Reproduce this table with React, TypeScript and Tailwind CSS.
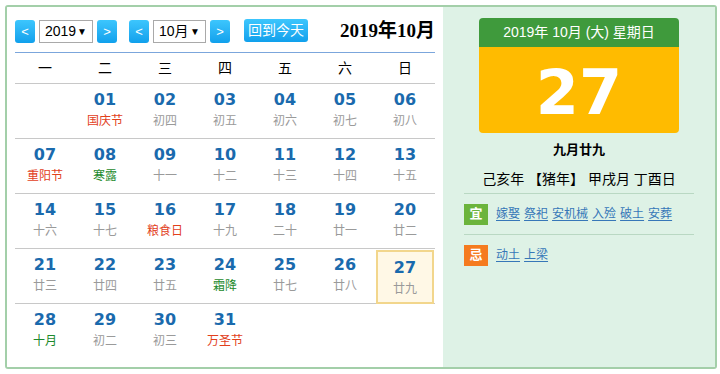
import React from "react";

type Day = { d: string; l: string; c?: "red" | "green"; today?: boolean } | null;

const rows: Day[][] = [
  [null, { d: "01", l: "国庆节", c: "red" }, { d: "02", l: "初四" }, { d: "03", l: "初五" }, { d: "04", l: "初六" }, { d: "05", l: "初七" }, { d: "06", l: "初八" }],
  [{ d: "07", l: "重阳节", c: "red" }, { d: "08", l: "寒露", c: "green" }, { d: "09", l: "十一" }, { d: "10", l: "十二" }, { d: "11", l: "十三" }, { d: "12", l: "十四" }, { d: "13", l: "十五" }],
  [{ d: "14", l: "十六" }, { d: "15", l: "十七" }, { d: "16", l: "粮食日", c: "red" }, { d: "17", l: "十九" }, { d: "18", l: "二十" }, { d: "19", l: "廿一" }, { d: "20", l: "廿二" }],
  [{ d: "21", l: "廿三" }, { d: "22", l: "廿四" }, { d: "23", l: "廿五" }, { d: "24", l: "霜降", c: "green" }, { d: "25", l: "廿七" }, { d: "26", l: "廿八" }, { d: "27", l: "廿九", today: true }],
  [{ d: "28", l: "十月", c: "green" }, { d: "29", l: "初二" }, { d: "30", l: "初三" }, { d: "31", l: "万圣节", c: "red" }, null, null, null],
];

const weekdays = ["一", "二", "三", "四", "五", "六", "日"];
const yi = ["嫁娶", "祭祀", "安机械", "入殓", "破土", "安葬"];
const ji = ["动土", "上梁"];

const sans = "font-['Liberation_Sans','Noto_Sans_CJK_SC',sans-serif]";

function NavBtn({ children }: { children: React.ReactNode }) {
  return (
    <span className="flex h-[23px] w-[20px] items-center justify-center rounded-[3px] bg-gradient-to-b from-[#3cc6fd] to-[#0fa0ec] text-[13px] text-white">
      {children}
    </span>
  );
}

function FakeSelect({ label, w }: { label: string; w: string }) {
  return (
    <span className={`flex h-[23px] ${w} items-center justify-between border border-[#a9a9a9] bg-white pl-[5px] pr-[5px] text-[14px] text-black`}>
      {label}
      <span className="text-[10px]">▼</span>
    </span>
  );
}

function Cell({ day }: { day: Day }) {
  if (!day) return <div className="h-[54px]" />;
  const color =
    day.c === "red" ? "text-[#e2401c]" : day.c === "green" ? "text-[#1d8a2c]" : "text-[#9a9a9a]";
  return (
    <div
      className={[
        "flex h-[54px] flex-col items-center pt-[5px]",
        day.today ? "m-[1px] h-[52px] border-2 border-[#f2d68c] bg-[#fff8e6] pt-[2px]" : "",
      ].join(" ")}
    >
      <span className="font-['DejaVu_Sans',sans-serif] text-[16px] font-bold leading-[22px] text-[#1a6aad]">
        {day.d}
      </span>
      <span className={`mt-[1px] text-[12px] leading-[18px] ${color}`}>{day.l}</span>
    </div>
  );
}

export default function App() {
  return (
    <div className={`h-[374px] w-[720px] bg-white p-[5px] ${sans}`}>
      <div className="flex h-[364px] w-[712px] overflow-hidden rounded-[3px] border-2 border-[#a3cfa9]">
        <div className="w-[436px] bg-white px-[8px]">
          <div className="flex h-[46px] items-start border-b border-[#7ba6dc] pt-[13px]">
            <NavBtn>&lt;</NavBtn>
            <span className="ml-[4px]">
              <FakeSelect label="2019" w="w-[54px]" />
            </span>
            <span className="ml-[4px]">
              <NavBtn>&gt;</NavBtn>
            </span>
            <span className="ml-[12px]">
              <NavBtn>&lt;</NavBtn>
            </span>
            <span className="ml-[4px]">
              <FakeSelect label="10月" w="w-[53px]" />
            </span>
            <span className="ml-[4px]">
              <NavBtn>&gt;</NavBtn>
            </span>
            <span className="ml-[14px] flex h-[23px] w-[64px] -translate-y-[1px] items-center justify-center rounded-[3px] bg-gradient-to-b from-[#3cc6fd] to-[#0fa0ec] text-[14px] text-white">
              回到今天
            </span>
            <span className="ml-auto font-['Liberation_Serif','Noto_Sans_CJK_SC',serif] text-[19px] font-bold leading-[22px] text-black">
              2019年10月
            </span>
          </div>
          <div className="grid h-[31px] grid-cols-7 border-b border-[#c8c8c8]">
            {weekdays.map((w) => (
              <div key={w} className="flex items-center justify-center text-[14px] text-black">
                {w}
              </div>
            ))}
          </div>
          {rows.map((r, i) => (
            <div
              key={i}
              className={[
                "grid h-[55px] grid-cols-7",
                i < rows.length - 1 ? "border-b border-[#c8c8c8]" : "",
              ].join(" ")}
            >
              {r.map((d, j) => (
                <Cell key={j} day={d} />
              ))}
            </div>
          ))}
        </div>

        <div className="flex flex-1 flex-col items-center bg-[#def2e6] pt-[11px]">
          <div className="w-[200px] overflow-hidden rounded-[4px]">
            <div className="flex h-[29px] items-center justify-center bg-[#3f9a3c] text-[14px] text-white">
              2019年 10月 (大) 星期日
            </div>
            <div className="flex h-[86px] items-center justify-center bg-[#ffbb00] pt-[5px] font-['DejaVu_Sans',sans-serif] text-[62px] font-bold leading-none text-white">
              27
            </div>
          </div>
          <div className="mt-[8px] text-[13px] font-bold leading-[18px] text-black">九月廿九</div>
          <div className="mt-[11px] text-[14px] leading-[18px] text-black">己亥年 【猪年】 甲戌月 丁酉日</div>
          <div className="mt-[5px] w-[230px] border-t border-[#b9d8c3]" />
          <div className="flex h-[40px] w-[230px] items-center">
            <span className="flex h-[21px] w-[24px] items-center justify-center bg-[#6bb43c] text-[13px] font-bold text-white">
              宜
            </span>
            <span className="ml-[8px] flex gap-[4px] text-[12px] text-[#3677b8]">
              {yi.map((t) => (
                <span key={t} className="underline underline-offset-2">
                  {t}
                </span>
              ))}
            </span>
          </div>
          <div className="w-[230px] border-t border-[#b9d8c3]" />
          <div className="flex h-[40px] w-[230px] items-center">
            <span className="flex h-[21px] w-[24px] items-center justify-center bg-[#f57b1f] text-[13px] font-bold text-white">
              忌
            </span>
            <span className="ml-[8px] flex gap-[4px] text-[12px] text-[#3677b8]">
              {ji.map((t) => (
                <span key={t} className="underline underline-offset-2">
                  {t}
                </span>
              ))}
            </span>
          </div>
        </div>
      </div>
    </div>
  );
}
